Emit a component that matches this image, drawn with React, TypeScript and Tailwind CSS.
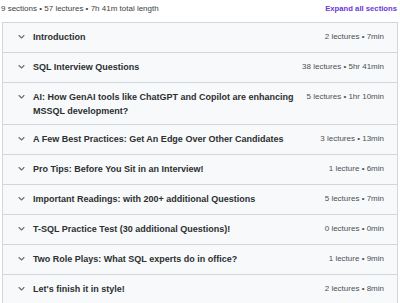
import React from "react";

const sections = [
  { title: "Introduction", meta: "2 lectures • 7min" },
  { title: "SQL Interview Questions", meta: "38 lectures • 5hr 41min" },
  {
    title: "AI: How GenAI tools like ChatGPT and Copilot are enhancing MSSQL development?",
    meta: "5 lectures • 1hr 10min",
  },
  { title: "A Few Best Practices: Get An Edge Over Other Candidates", meta: "3 lectures • 13min" },
  { title: "Pro Tips: Before You Sit in an Interview!", meta: "1 lecture • 6min" },
  { title: "Important Readings: with 200+ additional Questions", meta: "5 lectures • 7min" },
  { title: "T-SQL Practice Test (30 additional Questions)!", meta: "0 lectures • 0min" },
  { title: "Two Role Plays: What SQL experts do in office?", meta: "1 lecture • 9min" },
  { title: "Let's finish it in style!", meta: "2 lectures • 8min" },
];

function Chevron() {
  return (
    <svg width="7" height="14" viewBox="0 0 7 14" className="shrink-0">
      <path d="M1 5.5 L3.5 8 L6 5.5" fill="none" stroke="#6a6f73" strokeWidth="1.1" strokeLinecap="round" strokeLinejoin="round" />
    </svg>
  );
}

export default function App() {
  return (
    <div className="w-[400px] h-[303px] overflow-hidden bg-white px-[2px] text-[#2d2f31]" style={{ fontFamily: '"Liberation Sans", Arial, sans-serif' }}>
      <div className="flex items-center justify-between pt-[3px] pb-[7px] pr-[1px] leading-[12px]">
        <span className="text-[8px] text-[#3e4143] -ml-[1px]">9 sections • 57 lectures • 7h 41m total length</span>
        <button className="text-[7.7px] font-bold text-[#6b36d6]">Expand all sections</button>
      </div>

      <div className="border border-[#d1d7dc] border-b-0 bg-[#f7f9fa]">
        {sections.map((s) => (
          <div key={s.title} className="flex items-start min-h-[30px] pt-[7px] pb-[6px] pl-[15px] pr-[13px] border-b border-[#d1d7dc]">
            <Chevron />
            <div className="flex-1 ml-[8px] mr-[4px] text-[9px] font-bold leading-[14px] text-[#2d2f31]">{s.title}</div>
            <div className="shrink-0 text-[8px] leading-[14px] text-[#4d5156]">{s.meta}</div>
          </div>
        ))}
      </div>
    </div>
  );
}
